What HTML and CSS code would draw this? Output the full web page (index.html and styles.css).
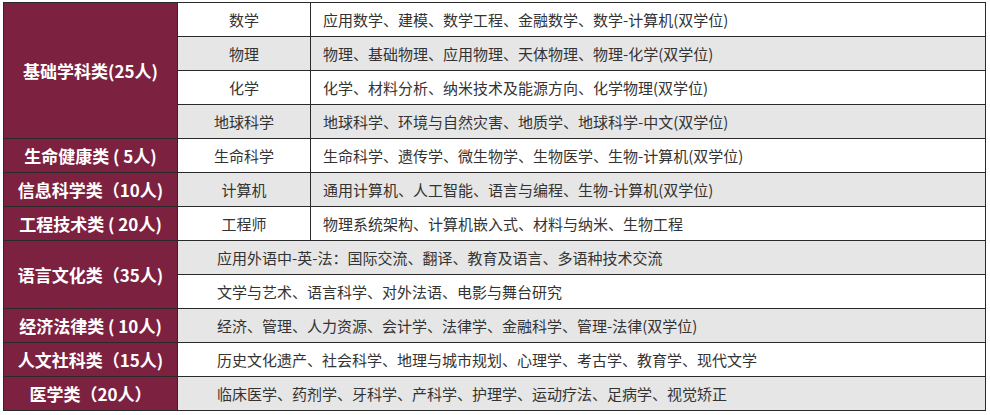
FILE: index.html
```html
<!DOCTYPE html>
<html lang="zh">
<head>
<meta charset="utf-8">
<link rel="stylesheet" href="styles.css">
</head>
<body>
<table class="majors">
  <colgroup>
    <col class="c-cat">
    <col class="c-sub">
    <col class="c-list">
  </colgroup>
  <tbody>
    <tr class="w">
      <th class="cat" rowspan="4">基础学科类(25人)</th>
      <td class="sub">数学</td>
      <td class="list">应用数学、建模、数学工程、金融数学、数学-计算机(双学位)</td>
    </tr>
    <tr class="g">
      <td class="sub">物理</td>
      <td class="list">物理、基础物理、应用物理、天体物理、物理-化学(双学位)</td>
    </tr>
    <tr class="w">
      <td class="sub">化学</td>
      <td class="list">化学、材料分析、纳米技术及能源方向、化学物理(双学位)</td>
    </tr>
    <tr class="g">
      <td class="sub">地球科学</td>
      <td class="list">地球科学、环境与自然灾害、地质学、地球科学-中文(双学位)</td>
    </tr>
    <tr class="w">
      <th class="cat">生命健康类 ( 5人)</th>
      <td class="sub">生命科学</td>
      <td class="list">生命科学、遗传学、微生物学、生物医学、生物-计算机(双学位)</td>
    </tr>
    <tr class="g">
      <th class="cat">信息科学类（10人)</th>
      <td class="sub">计算机</td>
      <td class="list">通用计算机、人工智能、语言与编程、生物-计算机(双学位)</td>
    </tr>
    <tr class="w">
      <th class="cat">工程技术类 ( 20人)</th>
      <td class="sub">工程师</td>
      <td class="list">物理系统架构、计算机嵌入式、材料与纳米、生物工程</td>
    </tr>
    <tr class="g">
      <th class="cat" rowspan="2">语言文化类（35人)</th>
      <td class="wide" colspan="2">应用外语中-英-法：国际交流、翻译、教育及语言、多语种技术交流</td>
    </tr>
    <tr class="w">
      <td class="wide" colspan="2">文学与艺术、语言科学、对外法语、电影与舞台研究</td>
    </tr>
    <tr class="g">
      <th class="cat">经济法律类 ( 10人)</th>
      <td class="wide" colspan="2">经济、管理、人力资源、会计学、法律学、金融科学、管理-法律(双学位)</td>
    </tr>
    <tr class="w">
      <th class="cat">人文社科类（15人)</th>
      <td class="wide" colspan="2">历史文化遗产、社会科学、地理与城市规划、心理学、考古学、教育学、现代文学</td>
    </tr>
    <tr class="g">
      <th class="cat">医学类（20人）</th>
      <td class="wide" colspan="2">临床医学、药剂学、牙科学、产科学、护理学、运动疗法、足病学、视觉矫正</td>
    </tr>
  </tbody>
</table>
</body>
</html>
```

FILE: styles.css
```css
html, body {
  margin: 0;
  padding: 0;
  background: #ffffff;
}

body {
  padding: 2px 0 0 3px;
  font-family: "Noto Sans CJK SC", "Noto Sans", sans-serif;
}

.majors {
  border-collapse: collapse;
  table-layout: fixed;
  width: 983px;
  color: #333333;
  font-size: 15px;
}

.c-cat { width: 174px; }
.c-sub { width: 133px; }
.c-list { width: auto; }

.majors tr { height: 34px; }

.majors td,
.majors th {
  border: 1px solid #2a2a2a;
  padding: 0;
  vertical-align: middle;
  line-height: 20px;
  white-space: nowrap;
}

.w td { background: #ffffff; }
.g td { background: #e6e6e6; }

.cat {
  background: #7d2140;
  color: #ffffff;
  font-weight: 700;
  font-size: 17px;
  text-align: center;
  border-color: #2a2a2a #2a2a2a #5e1830 #2a2a2a;
}

.sub {
  text-align: center;
}

.list {
  text-align: left;
  padding-left: 12px !important;
}

.wide {
  text-align: left;
  padding-left: 39px !important;
}
```
